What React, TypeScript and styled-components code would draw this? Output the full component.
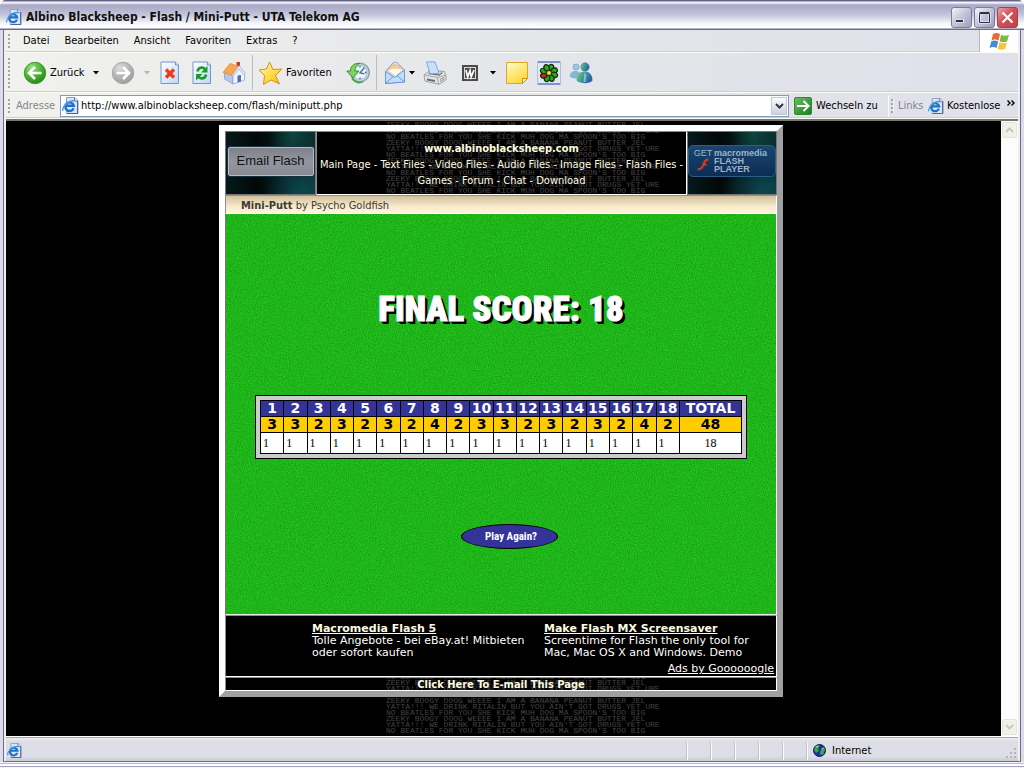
import React from "react";
import styled, { createGlobalStyle } from "styled-components";

const UI = `"DejaVu Sans Condensed", "DejaVu Sans", sans-serif`;
const WIDE = `"DejaVu Sans", sans-serif`;

const GlobalStyle = createGlobalStyle`
  * { box-sizing: border-box; }
  body { margin: 0; font: 11px/14px ${UI}; color: #000; }
  button, input { font: inherit; color: inherit; margin: 0; }
  svg { display: block; flex: none; }
`;

/* ---------- window frame ---------- */

const Window = styled.div`
  height: 100vh;
  min-height: 400px;
  display: flex;
  flex-direction: column;
  background: linear-gradient(#6a6790 0 1px, #f4f4fa 1px 3px, #dcdce8 3px);
  border-radius: 6px 6px 0 0;
  overflow: hidden;
`;

const TitleBar = styled.header`
  flex: none;
  height: 30px;
  display: flex;
  align-items: center;
  padding: 4px 6px 0 6px;
  background: linear-gradient(#67648b 0 1px, #fbfbff 2px, #ecebf6 3px, #a9a8c6 5px, #b3b2ce 9px, #c5c5db 15px, #f4f4fa 23px, #fff 27px, #fff 28px, #6b6b90 29px);
`;

const Title = styled.h1`
  flex: 1;
  margin: 0 0 0 4px;
  font: bold 12px/16px ${UI};
  color: #111;
  white-space: nowrap;
`;

const WindowButtons = styled.div`
  display: flex;
  gap: 2px;
`;

const WindowButton = styled.button<{ $close?: boolean }>`
  width: 21px;
  height: 21px;
  padding: 0;
  display: grid;
  place-items: center;
  border: 1px solid ${(p) => (p.$close ? "#a8404a" : "#7c7b9c")};
  border-radius: 3px;
  background: ${(p) =>
    p.$close
      ? "linear-gradient(135deg, #eba6a6, #d2525a 45%, #c03f49)"
      : "linear-gradient(135deg, #f5f5fb, #c3c3d8 50%, #9f9ebd)"};
`;

const Body = styled.div`
  flex: 1;
  min-height: 0;
  display: flex;
  flex-direction: column;
  margin: 0 3px;
  padding: 0 2px;
  border: solid #6b6b90;
  border-width: 0 1px 1px;
  background: #efefee;
`;

const Frame = styled.div`
  flex: none;
  height: 6px;
  background: linear-gradient(#f6f6fb 0 1px, #b9b9d0 1px 2px, #fff 2px 4px, #a3a2c4 4px 5px, #f2f2fa 5px);
`;

/* ---------- bars ---------- */

const Bar = styled.div<{ $h: number }>`
  flex: none;
  height: ${(p) => p.$h}px;
  display: flex;
  align-items: center;
  padding-left: 2px;
  background: linear-gradient(90deg, #f1f1ee, #e6e7ea 45%, #dfe0ea);
  border-bottom: 1px solid #fdfdf8;
  box-shadow: inset 0 -1px #d9cdb8;
`;

const Grip = styled.span<{ $h: number }>`
  flex: none;
  width: 3px;
  height: ${(p) => p.$h}px;
  background: repeating-linear-gradient(#a2a2a2 0 2px, transparent 2px 4px);
  border-right: 1px solid #f4f4f2;
`;

const Menu = styled.nav`
  display: flex;
  flex: 1;
  gap: 15px;
  padding-left: 12px;
`;

const MenuItem = styled.button`
  padding: 0;
  border: 0;
  background: none;
  line-height: 18px;
`;

const Throbber = styled.div`
  align-self: stretch;
  width: 39px;
  display: grid;
  place-items: center;
  border-left: 1px solid #b8b8c0;
  background: #fff;
`;

const Tools = styled.div`
  display: flex;
  align-items: center;
  padding-left: 11px;
`;

const Tool = styled.button<{ $w: number; $pad?: number }>`
  width: ${(p) => p.$w}px;
  height: 36px;
  padding: 0 0 0 ${(p) => p.$pad ?? 0}px;
  display: flex;
  align-items: center;
  justify-content: ${(p) => (p.$pad === undefined ? "center" : "flex-start")};
  gap: 3px;
  border: 0;
  background: none;
  white-space: nowrap;
`;

const Separator = styled.span`
  width: 1px;
  height: 35px;
  background: #b9bcc6;
`;

const AddressForm = styled.form`
  flex: 1;
  min-width: 0;
  display: flex;
  align-items: center;
`;

const Muted = styled.span`
  color: #85858c;
`;

const AddressLabel = styled.label`
  width: 49px;
  padding-left: 5px;
  color: #85858c;
`;

const AddressBox = styled.div`
  flex: 1;
  min-width: 0;
  height: 22px;
  display: flex;
  align-items: center;
  padding: 1px;
  border: 1px solid #7f9db9;
  background: #fff;
`;

const AddressInput = styled.input`
  flex: 1;
  min-width: 0;
  border: 0;
  padding: 0 0 0 2px;
  outline: 0;
  background: none;
`;

const DropButton = styled.button`
  width: 16px;
  height: 18px;
  padding: 0;
  display: grid;
  place-items: center;
  border: 1px solid #c4c7d8;
  background: linear-gradient(#fbfbfe, #cfd0df);
`;

const GoButton = styled.button`
  width: 100px;
  padding: 0 0 0 5px;
  display: flex;
  align-items: center;
  gap: 4px;
  border: 0;
  border-right: 1px solid #fafaf6;
  background: none;
  line-height: 22px;
  white-space: nowrap;
`;

const LinksBar = styled.div`
  flex: none;
  width: 129px;
  display: flex;
  align-items: center;
  padding-left: 2px;
`;

const LinksTitle = styled(Muted)`
  flex: none;
  width: 34px;
  padding-left: 4px;
`;

const LinkItem = styled.a`
  flex: none;
  width: 75px;
  display: flex;
  align-items: center;
  gap: 3px;
  color: #000;
  text-decoration: none;
`;

const MoreButton = styled.button`
  align-self: flex-start;
  width: 15px;
  height: 10px;
  padding: 0;
  display: grid;
  place-items: center;
  border: 0;
  background: none;
`;

/* ---------- page area ---------- */

const View = styled.div`
  flex: 1;
  min-height: 0;
  display: flex;
  border-top: 2px solid #77776f;
  border-bottom: 1px solid #fff;
`;

const Page = styled.main`
  position: relative;
  flex: 1;
  min-width: 0;
  overflow: hidden;
  background: #000;
  padding: 4px 5px 0 0;
`;

const Wallpaper = styled.div`
  position: absolute;
  inset: 1px 0 0;
  display: flex;
  justify-content: center;
  overflow: hidden;
  padding-left: 25px;
`;

const WallpaperText = styled.div`
  width: 260px;
  white-space: pre;
  font: 8px/6px "Liberation Mono", monospace;
  color: #444;
`;

const WallpaperLine = styled.div`
  height: 6px;
`;

const ScrollBar = styled.div`
  width: 17px;
  display: flex;
  flex-direction: column;
  justify-content: space-between;
  align-items: center;
  padding: 1px;
  background: #fcfcfd;
`;

const ScrollButton = styled.button`
  width: 15px;
  height: 16px;
  padding: 0;
  display: grid;
  place-items: center;
  border: 1px solid #e4e4da;
  border-radius: 2px;
  background: #f1f1ea;
`;

const Site = styled.div`
  position: relative;
  width: 564px;
  max-width: 100%;
  margin: 0 auto;
  border: 6px solid;
  border-color: #fff #a0a0a3 #a0a0a3 #fff;
`;

const Row = styled.div`
  display: flex;
`;

const Cell = styled.div`
  border: 1px solid;
  border-color: #8e8e8e #fff #fff #8e8e8e;
`;

const SideCell = styled(Cell)<{ $w: number }>`
  width: ${(p) => p.$w}px;
  height: 64px;
  display: flex;
  align-items: center;
  justify-content: center;
  padding-bottom: 4px;
  border-color: #777;
  background:
    radial-gradient(ellipse 24px 40px at 75% 5%, #0f5046cc, transparent),
    radial-gradient(ellipse 40px 36px at 85% 95%, #0d4f58cc, transparent),
    linear-gradient(90deg, #06191b, #020808 35%, #0a2c30);
`;

const EmailButton = styled.button`
  width: 86px;
  height: 29px;
  padding: 0;
  border: 1px solid #b9bcc4;
  border-radius: 2px;
  box-shadow: 0 0 0 1px #16323f;
  background: linear-gradient(#7d808a, #94959f 50%, #878993);
  color: #111;
  font: 13px/16px "Liberation Sans", sans-serif;
`;

const FlashBadge = styled.a`
  width: 88px;
  height: 32px;
  flex: none;
  display: flex;
  padding: 3px 0 0 3px;
  border: 1px solid #2a5c86;
  border-radius: 5px;
  background: linear-gradient(#1a4670, #0b2d54);
  color: #9fb4c6;
  font: 9px/8px "Liberation Sans", sans-serif;
  text-decoration: none;
`;

const BadgeLeft = styled.span`
  width: 22px;
  display: flex;
  flex-direction: column;
  align-items: center;
  gap: 1px;
`;

const BadgeRight = styled.span`
  font-weight: bold;
  white-space: nowrap;
`;

const NavCell = styled(Cell)`
  flex: 1;
  padding-top: 9px;
  text-align: center;
  font-size: 11px;
  line-height: 16px;
  color: #fffbe0;
  white-space: nowrap;
`;

const SiteName = styled.h2`
  margin: 0;
  font: bold 11px/16px ${UI};
`;

const PaleLink = styled.a`
  color: #fffbe0;
  text-decoration: none;
`;

const TitleCell = styled(Cell)`
  height: 18px;
  padding-left: 15px;
  line-height: 19px;
  color: #3c3a34;
  border-bottom-width: 0;
  background: linear-gradient(#d2c09c, #f6eacb 60%, #fdf4dc);
`;

const Game = styled.section`
  position: relative;
  height: 402px;
  display: flex;
  flex-direction: column;
  align-items: center;
  border: 1px solid;
  border-color: #fff #fff #e8e8e8 #777;
  background: #20b81c;
  overflow: hidden;
  padding-top: 75px;
`;

const Grass = styled.svg`
  position: absolute;
  inset: 0;
  width: 100%;
  height: 100%;
`;

const FinalScore = styled.h3`
  position: relative;
  margin: 0 0 64px;
  font: 900 35px/42px "Liberation Sans Narrow", "Roboto Condensed", "Liberation Sans", sans-serif;
  color: #fff;
  white-space: nowrap;
  -webkit-text-stroke: 1px #fff;
  text-shadow: 1px 1px #000, 2px 2px #000, 3px 3px #000;
`;

const CardFrame = styled.div`
  position: relative;
  padding: 4px;
  border: 1px solid #000;
  background: #ccc;
`;

const Card = styled.table`
  width: 482px;
  table-layout: fixed;
  border-collapse: collapse;
  background: #fff;
`;

const TotalCol = styled.col`
  width: 62px;
`;

const CardCell = styled.td<{ $kind: "hole" | "par" | "score"; $center?: boolean }>`
  height: ${(p) => (p.$kind === "score" ? 21 : 16)}px;
  padding: 0 0 0 ${(p) => (p.$kind === "score" && !p.$center ? 2 : 0)}px;
  border: 1px solid #000;
  text-align: ${(p) => (p.$kind !== "score" || p.$center ? "center" : "left")};
  color: ${(p) => (p.$kind === "hole" ? "#fff" : "#000")};
  background: ${(p) => ({ hole: "#333399", par: "#ffcc00", score: "#fff" })[p.$kind]};
  font: ${(p) =>
    p.$kind === "score"
      ? `12px/16px "Liberation Serif", serif`
      : `bold 14px/15px ${WIDE}`};
`;

const PlayAgain = styled.button`
  position: relative;
  width: 97px;
  height: 25px;
  margin: 65px 0 0 16px;
  padding: 0 0 0 4px;
  border: 1px solid #000;
  border-radius: 50%;
  background: #333399;
  color: #fff;
  font: bold 11px/14px "Liberation Sans Narrow", "Roboto Condensed", "Liberation Sans", sans-serif;
`;

const AdsCell = styled(Cell)`
  height: 62px;
  padding: 6px 2px 0 86px;
  background: #000;
  color: #fff;
  font: 11px/12px ${WIDE};
`;

const Ads = styled.div`
  display: grid;
  grid-template-columns: 232px 1fr;
  height: 41px;
`;

const AdLink = styled.a`
  display: block;
  color: #fffbe0;
  font: bold 11px/13px ${WIDE};
  white-space: nowrap;
`;

const AdText = styled.p`
  margin: 0;
  white-space: pre;
`;

const AdsBy = styled.a`
  display: block;
  text-align: right;
  color: #fff;
`;

const MailCell = styled(Cell)`
  height: 14px;
  line-height: 13px;
  text-align: center;
  font-weight: bold;
`;

/* ---------- status bar ---------- */

const Status = styled.footer`
  flex: none;
  height: 24px;
  display: flex;
  align-items: center;
  padding-top: 2px;
  border-top: 1px solid #a9a9a2;
  background: linear-gradient(#ececf0, #dcdde4 4px, #dedfe6 18px, #c9cad6);
`;

const StatusMain = styled.div`
  flex: 1;
  padding-left: 1px;
`;

const Pane = styled.div<{ $w: number }>`
  width: ${(p) => p.$w}px;
  height: 18px;
  display: flex;
  align-items: center;
  gap: 6px;
  padding-left: 6px;
  border-left: 1px solid #c6c6c0;
  box-shadow: inset 1px 0 #fafafa;
`;

const StatusGrip = styled.div`
  align-self: flex-end;
  padding: 0 1px 2px 0;
`;

/* ---------- icons ---------- */

const PageIE = ({ s = 17 }: { s?: number }) => (
  <svg width={s} height={s} viewBox="0 0 17 17">
    <path d="M4.500 .5h8.500l3 3v13H4.500z" fill="#d9e6fa" stroke="#8a9cc4" />
    <path d="M15.500 4v12.500H5" fill="none" stroke="#4d5f8c" />
    <path d="M12.500.5v3.500h3.500" fill="#f4f8ff" stroke="#566a92" />
    <path d="M11.600 11.300A4.300 4.300 0 1 1 11.800 8.800H4" fill="none" stroke="#1e72c8" strokeWidth="2.400" />
    <path d="M1 14C-.5 10.500 6 3 12.500 3.800" fill="none" stroke="#4a9ae4" strokeWidth="1.400" />
  </svg>
);

const Caret = ({ color = "#000" }: { color?: string }) => (
  <svg width="6" height="4" viewBox="0 0 6 4"><path d="M0 0h6L3 3.500z" fill={color} /></svg>
);

const Arrow = ({ back }: { back?: boolean }) => (
  <svg width="24" height="24" viewBox="0 0 24 24">
    <defs>
      <radialGradient id={back ? "gb" : "gf"} cx=".35" cy=".25" r=".85">
        <stop offset="0" stopColor={back ? "#9be27a" : "#dcdcdc"} />
        <stop offset=".55" stopColor={back ? "#46b02c" : "#b3b3b3"} />
        <stop offset="1" stopColor={back ? "#1f7d14" : "#9a9a9a"} />
      </radialGradient>
    </defs>
    <circle cx="12" cy="12" r="10.700" fill={`url(#${back ? "gb" : "gf"})`} stroke={back ? "#3d9a2c" : "#a5a5a5"} />
    <path
      d={back ? "M18.500 12H7M12 6l-6 6 6 6" : "M5.500 12H17M12 6l6 6-6 6"}
      fill="none" stroke="#fff" strokeWidth="2.600"
    />
  </svg>
);

const Sheet = ({ children }: { children: React.ReactNode }) => (
  <svg width="20" height="24" viewBox="0 0 20 24">
    <defs>
      <linearGradient id="sheet" x2="1" y2="1">
        <stop offset="0" stopColor="#fff" /><stop offset="1" stopColor="#bcd6fa" />
      </linearGradient>
    </defs>
    <path d="M1 1h14.500l3 3V22.500H1z" fill="url(#sheet)" stroke="#7396cf" />
    <path d="M15.500 1v3h3" fill="#dce9fc" stroke="#7396cf" />
    {children}
  </svg>
);

const StopIcon = () => (
  <Sheet><path d="M6 8.500l8 8M14 8.500l-8 8" stroke="#ee3a16" strokeWidth="3.400" /></Sheet>
);

const RefreshIcon = () => (
  <Sheet>
    <path d="M5.500 10.500c.5-4 5-5 7.500-2.500" fill="none" stroke="#1d9a2a" strokeWidth="2.700" />
    <path d="M15.500 5v6.500H9z" fill="#1d9a2a" />
    <path d="M14 13.500c-.5 4-5 5-7.500 2.500" fill="none" stroke="#1d9a2a" strokeWidth="2.700" />
    <path d="M4 19.500V13h6.500z" fill="#1d9a2a" />
  </Sheet>
);

const HomeIcon = () => (
  <svg width="24" height="24" viewBox="0 0 24 24">
    <path d="M14.500 1h3.500v6h-3.500z" fill="#c8391f" />
    <path d="M2.500 11L11 14.500V23l-8.500-5z" fill="#b4c8ec" stroke="#8aa0cf" strokeWidth=".8" />
    <path d="M11 14L17 7l5.500 6.500V19L11 23z" fill="#f3f7ff" stroke="#8ba3d2" strokeWidth=".8" />
    <path d="M1 11.500L8 2.500 17 5.500 10 14.500z" fill="#fba54c" stroke="#e08a3e" strokeWidth=".8" />
    <path d="M17 4.500l6.500 8-1.500 1.500-5-6-6 7.500-1.200-1z" fill="#e9eefb" stroke="#8ba3d2" strokeWidth=".7" />
    <path d="M15.500 14.500l3.500-.5v6.500l-3.500 1z" fill="#4c6fb6" />
  </svg>
);

const StarIcon = () => (
  <svg width="25" height="24" viewBox="0 0 25 24">
    <defs>
      <linearGradient id="star" x2="1" y2="1">
        <stop offset="0" stopColor="#fffbc0" /><stop offset=".6" stopColor="#ffd93b" /><stop offset="1" stopColor="#f4b014" />
      </linearGradient>
    </defs>
    <path d="M11.500 1l3.500 7.500 9-.5-6.500 6.500 4 8.500-8.500-4-7.500 4.500 1-9L1 9l7.500-1z" fill="url(#star)" stroke="#d9901c" strokeLinejoin="round" />
  </svg>
);

const HistoryIcon = () => (
  <svg width="24" height="24" viewBox="0 0 24 24">
    <circle cx="14" cy="11.500" r="9.300" fill="#c9dcec" stroke="#8ba0b0" strokeWidth="1.500" />
    <circle cx="14" cy="11.500" r="7" fill="#e9f4fc" stroke="#a6bccb" />
    <path d="M14 5v1.500M14 16.500V18M19 11.500h1.500M18.500 6.500l-4.500 5.300 4.500 1" fill="none" stroke="#4a6c86" strokeWidth="1.300" />
    <path d="M13.500 2.500C7 2 4.500 6 4.500 10H.8l6.200 7 6-7H9c0-2.500 1-5 4.500-7.500z" fill="#7ed463" stroke="#2f8a22" strokeWidth=".9" />
    <path d="M6 17c2 4.500 7 5.500 11 3.500" fill="none" stroke="#4aa63a" strokeWidth="1.800" />
  </svg>
);

const MailIcon = () => (
  <svg width="22" height="24" viewBox="0 0 22 24">
    <path d="M1.500 10.500L9 2c1.500-1.200 3-1 4.500 0l7 7V21L1.500 22.500z" fill="#d5e6fb" stroke="#7f9fd6" />
    <path d="M3.500 10c2-3.500 4-6 7-6.500 4 .5 6 3 8 5.500L11 15z" fill="#fbc98d" stroke="#e8a45c" strokeWidth=".6" />
    <path d="M4 9.500c4-2 10-2.500 14.500-.8L11.500 15z" fill="#fffdf5" />
    <path d="M1.500 10.500l9 6 10-7.500V21L1.500 22.500z" fill="#bfe0fb" stroke="#6f94d2" />
    <path d="M1.500 22.500l7.500-7M20.500 21l-7.500-6.500" stroke="#6f94d2" />
  </svg>
);

const PrinterIcon = () => (
  <svg width="24" height="24" viewBox="0 0 24 24">
    <path d="M1 14l6-4.500L21.500 10.500 23 15v4l-7 4.300L2 20z" fill="#e6e6e8" stroke="#9d9da2" />
    <path d="M5.500 12.500L16 14l3.500-2.500" fill="none" stroke="#77777e" strokeWidth="1.500" />
    <path d="M3.500 1L12 .8l4 11.500-9 .5z" fill="#c9e0fb" stroke="#83a5dc" />
    <path d="M1 14l13.500 2.500L23 14M14.500 16.500l1 6.500" fill="none" stroke="#a4a4aa" />
    <path d="M4 17.500l8 1.500v2l-8-1.500z" fill="#6a6a72" />
    <path d="M17 18.500l4.500-2.500M17 20.500l4.500-2.500" stroke="#8a8a90" />
  </svg>
);

const WordIcon = () => (
  <svg width="16" height="16" viewBox="0 0 16 16">
    <path d="M0 0h16v16H0z" fill="#4b4b4b" />
    <path d="M2 2.500h12M2 13.500h12M2.500 2v12M13.500 2v12" stroke="#d9d9d9" />
    <path d="M4 5l1.700 7L8 5.500l1.200 6.500L12 5" fill="none" stroke="#fff" strokeWidth="1.700" />
  </svg>
);

const NoteIcon = () => (
  <svg width="22" height="22" viewBox="0 0 22 22">
    <defs>
      <linearGradient id="note" x2=".6" y2="1">
        <stop offset="0" stopColor="#fffbc4" /><stop offset="1" stopColor="#fcd73c" />
      </linearGradient>
    </defs>
    <path d="M.5.5h21v16l-5 5H.5z" fill="url(#note)" stroke="#dba72b" />
    <path d="M16.500 21.500v-5h5z" fill="#fff3a0" stroke="#c88f18" />
  </svg>
);

const FlowerIcon = () => (
  <svg width="24" height="24" viewBox="0 0 24 24">
    <path d="M0 0h24v24H0z" fill="#dfe7f7" />
    <path d="M0 1h24M0 23h24" stroke="#7f93d2" strokeWidth="2" />
    <path d="M.5 0v24M23.500 0v24" stroke="#b3bfe2" />
    {[0, 45, 90, 135, 180, 225, 270, 315].map((a) => (
      <ellipse key={a} cx="12" cy="6.300" rx="2.600" ry="3.300" fill={a === 225 ? "#d8231b" : "#35a51f"} stroke="#0b2a08" strokeWidth="1.200" transform={`rotate(${a + 20} 12 12)`} />
    ))}
    <circle cx="12" cy="12" r="2.300" fill="#f7e43b" stroke="#333" strokeWidth=".6" />
  </svg>
);

const PeopleIcon = () => (
  <svg width="24" height="22" viewBox="0 0 24 22">
    <defs>
      <linearGradient id="ppl" x2="1" y2=".4">
        <stop offset="0" stopColor="#8fce6a" /><stop offset=".5" stopColor="#3f9a9c" /><stop offset="1" stopColor="#2c62a8" />
      </linearGradient>
    </defs>
    <circle cx="7" cy="5" r="3" fill="#9cc8e6" stroke="#5d92c2" strokeWidth=".6" />
    <path d="M.5 14c1-4 3-5 6-5s5 1.500 6 5l-3 2c-4 1-8 0-9-2z" fill="#7eb9d6" />
    <circle cx="16" cy="5" r="4.200" fill="url(#ppl)" stroke="#2e7390" strokeWidth=".5" />
    <path d="M7.500 18.500c0-6 3.500-9 8-9s8 3 8 9c-3 3.500-12 3.500-16 0z" fill="url(#ppl)" />
    <path d="M15.500 10l2 3-1 7h-2z" fill="#bfe3dc" opacity=".6" />
  </svg>
);

const WindowsFlag = () => (
  <svg width="21" height="19" viewBox="0 0 21 19">
    <path d="M4 2c2.500-1.500 4.500-1.500 7 0L9.500 8.500c-2.500-1.500-4.500-1.500-7 0z" fill="#ee6a35" />
    <path d="M12 2.800c2.500 1.300 5 1.300 8 0l-1.800 6.500c-2.500 1.300-5 1.300-7.500 0z" fill="#7cbb3f" />
    <path d="M2.200 9.500c2.500-1.400 4.500-1.400 7 0l-1.600 6.500c-2.500-1.400-4.800-1.400-7 0z" fill="#4a88d8" />
    <path d="M10.400 10.300c2.500 1.300 5 1.300 7.500 0l-1.700 6.500c-2.500 1.400-5 1.400-7.500 0z" fill="#f8c53a" />
  </svg>
);

const GoIcon = () => (
  <svg width="18" height="18" viewBox="0 0 18 18">
    <defs>
      <linearGradient id="go" x2="1" y2="1">
        <stop offset="0" stopColor="#6fbf63" /><stop offset="1" stopColor="#1a7c1e" />
      </linearGradient>
    </defs>
    <rect x=".5" y=".5" width="17" height="17" rx="1.500" fill="url(#go)" stroke="#2c8b2e" />
    <path d="M3 9h10M9.500 4l5 5-5 5" fill="none" stroke="#fff" strokeWidth="2" />
  </svg>
);

const Chevron = ({ up, color }: { up?: boolean; color: string }) => (
  <svg width="9" height="6" viewBox="0 0 9 6">
    <path d={up ? "M1 5l3.500-3.500L8 5" : "M1 1l3.500 3.500L8 1"} fill="none" stroke={color} strokeWidth="2" />
  </svg>
);

const GlobeIcon = () => (
  <svg width="13" height="13" viewBox="0 0 13 13">
    <circle cx="6.500" cy="6.500" r="6" fill="#1b2fa8" stroke="#0d1b4d" />
    <path d="M2 3c2-2.500 4.500-2 5-1L5 5l1 2-3 2-2-3zM8 5l3-2 1 3-1.500 4L8 11.500 7 9z" fill="#3fa34a" />
    <path d="M3 3l2-1M9 5l1.500-.8" stroke="#bfe8c0" />
  </svg>
);

const FlashMark = () => (
  <svg width="12" height="13" viewBox="0 0 12 13">
    <path d="M11.500.5C7.500.5 6.500 3 5.500 6 4.500 9 3.500 10 .5 10.200v2.300C5 12.500 6 10 7 7.800h2.500V5.600H8C8.700 3.800 9.500 3 11.500 2.800z" fill="#d23a22" />
  </svg>
);

/* ---------- data ---------- */

const menu = ["Datei", "Bearbeiten", "Ansicht", "Favoriten", "Extras", "?"];
const pars = [3, 3, 2, 3, 2, 3, 2, 4, 2, 3, 3, 2, 3, 2, 3, 2, 4, 2];
const navRows = [
  ["Main Page", "Text Files", "Video Files", "Audio Files", "Image Files", "Flash Files"],
  ["Games", "Forum", "Chat", "Download"],
];
const chant = [
  "ZEEKY BOOGY DOOG WEEEE I AM A BANANA PEANUT BUTTER JEL",
  "YATTA!!! WE DRINK RITALIN BUT YOU AIN'T GOT DRUGS YET URE",
  "NO BEATLES FOR YOU SHE KICK MUH DOG MA SPOON'S TOO BIG",
];
/* The lines from 12 to 91 lie behind the opaque game panel and stay empty. */
const wallpaperLines = Array.from({ length: 102 }, (_, i) =>
  i > 11 && i < 92 ? "" : chant[i % 3]
);

export default function App() {
  return (
    <>
      <GlobalStyle />
      <Window>
        <TitleBar>
          <PageIE s={16} />
          <Title>Albino Blacksheep - Flash / Mini-Putt - UTA Telekom AG</Title>
          <WindowButtons>
            <WindowButton aria-label="Minimieren">
              <svg width="13" height="13" viewBox="0 0 13 13"><path d="M1 8.500h8v3H1z" fill="#fff" /><path d="M1 9h7v2H1z" fill="#2e2e48" /></svg>
            </WindowButton>
            <WindowButton aria-label="Maximieren">
              <svg width="13" height="13" viewBox="0 0 13 13"><path d="M1.500 2h10v9.500h-10z" fill="none" stroke="#fff" strokeWidth="2" /><path d="M1.500 2.500h10v9h-10zM1.500 1.500h10" fill="none" stroke="#2e2e48" /></svg>
            </WindowButton>
            <WindowButton $close aria-label="Schließen">
              <svg width="13" height="13" viewBox="0 0 13 13"><path d="M1.500 1.500l10 10M11.500 1.500l-10 10" stroke="#fff" strokeWidth="2.200" /></svg>
            </WindowButton>
          </WindowButtons>
        </TitleBar>

        <Body>
          <Bar $h={23}>
            <Grip $h={14} />
            <Menu>
              {menu.map((m) => <MenuItem key={m}>{m}</MenuItem>)}
            </Menu>
            <Throbber><WindowsFlag /></Throbber>
          </Bar>

          <Bar $h={40}>
            <Grip $h={30} />
            <Tools>
              <Tool $w={66} $pad={1}><Arrow back />Zurück</Tool>
              <Tool $w={16} aria-label="Zurück-Verlauf"><Caret /></Tool>
              <Tool $w={38} aria-label="Vorwärts"><Arrow /></Tool>
              <Tool $w={10} aria-label="Vorwärts-Verlauf"><Caret color="#b5b5b5" /></Tool>
              <Tool $w={36} aria-label="Abbrechen"><StopIcon /></Tool>
              <Tool $w={28} aria-label="Aktualisieren"><RefreshIcon /></Tool>
              <Tool $w={36} aria-label="Startseite"><HomeIcon /></Tool>
              <Separator />
              <Tool $w={86} $pad={5}><StarIcon />Favoriten</Tool>
              <Tool $w={37} aria-label="Verlauf"><HistoryIcon /></Tool>
              <Separator />
              <Tool $w={38} $pad={7} aria-label="E-Mail"><MailIcon /><Caret /></Tool>
              <Tool $w={40} aria-label="Drucken"><PrinterIcon /></Tool>
              <Tool $w={30} aria-label="Bearbeiten mit Word"><WordIcon /></Tool>
              <Tool $w={16} aria-label="Editor wählen"><Caret /></Tool>
              <Tool $w={32} aria-label="Diskussion"><NoteIcon /></Tool>
              <Tool $w={32} aria-label="ICQ"><FlowerIcon /></Tool>
              <Tool $w={32} aria-label="Messenger"><PeopleIcon /></Tool>
            </Tools>
          </Bar>

          <Bar $h={26}>
            <Grip $h={14} />
            <AddressForm onSubmit={(e) => e.preventDefault()}>
              <AddressLabel htmlFor="url">Adresse</AddressLabel>
              <AddressBox>
                <PageIE />
                <AddressInput id="url" defaultValue="http://www.albinoblacksheep.com/flash/miniputt.php" />
                <DropButton type="button" aria-label="Adressen anzeigen"><Chevron color="#2f3547" /></DropButton>
              </AddressBox>
              <GoButton><GoIcon />Wechseln zu</GoButton>
            </AddressForm>
            <LinksBar>
              <Grip $h={14} />
              <LinksTitle>Links</LinksTitle>
              <LinkItem href="#"><PageIE s={16} />Kostenlose</LinkItem>
              <MoreButton aria-label="Weitere Links">
                <svg width="8" height="6" viewBox="0 0 8 6"><path d="M.5.500L3 3 .5 5.500M4.500.500L7 3 4.500 5.500" fill="none" stroke="#000" strokeWidth="1.400" /></svg>
              </MoreButton>
            </LinksBar>
          </Bar>

          <View>
            <Page>
              <Wallpaper aria-hidden="true">
                <WallpaperText>
                  {wallpaperLines.map((line, i) => (
                    <WallpaperLine key={i}>{line}</WallpaperLine>
                  ))}
                </WallpaperText>
              </Wallpaper>

              <Site>
                <Row>
                  <SideCell $w={91}><EmailButton>Email Flash</EmailButton></SideCell>
                  <NavCell>
                    <SiteName>www.albinoblacksheep.com</SiteName>
                    {navRows.map((row, r) => (
                      <div key={r}>
                        {row.map((n, i) => (
                          <React.Fragment key={n}>
                            {i > 0 && " - "}
                            <PaleLink href="#">{n}</PaleLink>
                          </React.Fragment>
                        ))}
                        {r === 0 && " -"}
                      </div>
                    ))}
                  </NavCell>
                  <SideCell $w={90}>
                    <FlashBadge href="#">
                      <BadgeLeft>GET<FlashMark /></BadgeLeft>
                      <BadgeRight>macromedia<br />FLASH<br />PLAYER</BadgeRight>
                    </FlashBadge>
                  </SideCell>
                </Row>
                <TitleCell><b>Mini-Putt</b> by Psycho Goldfish</TitleCell>
                <Game>
                  <Grass aria-hidden="true">
                    <filter id="grass" x="0" y="0" width="100%" height="100%" colorInterpolationFilters="sRGB">
                      <feTurbulence type="fractalNoise" baseFrequency=".85" numOctaves="2" seed="4" />
                      <feColorMatrix values=".16 0 0 0 .04  .24 0 0 0 .59  .14 0 0 0 .03  0 0 0 0 1" />
                    </filter>
                    <rect width="100%" height="100%" filter="url(#grass)" />
                  </Grass>
                  <FinalScore>FINAL SCORE: 18</FinalScore>
                  <CardFrame>
                    <Card>
                      <colgroup>
                        {pars.map((_, i) => <col key={i} />)}
                        <TotalCol />
                      </colgroup>
                      <tbody>
                        <tr>
                          {pars.map((_, i) => <CardCell as="th" scope="col" $kind="hole" key={i}>{i + 1}</CardCell>)}
                          <CardCell as="th" scope="col" $kind="hole">TOTAL</CardCell>
                        </tr>
                        <tr>
                          {pars.map((p, i) => <CardCell $kind="par" key={i}>{p}</CardCell>)}
                          <CardCell $kind="par">48</CardCell>
                        </tr>
                        <tr>
                          {pars.map((_, i) => <CardCell $kind="score" key={i}>1</CardCell>)}
                          <CardCell $kind="score" $center>18</CardCell>
                        </tr>
                      </tbody>
                    </Card>
                  </CardFrame>
                  <PlayAgain>Play Again?</PlayAgain>
                </Game>
                <AdsCell>
                  <Ads>
                    <div>
                      <AdLink href="#">Macromedia Flash 5</AdLink>
                      <AdText>{"Tolle Angebote - bei eBay.at! Mitbieten\noder sofort kaufen"}</AdText>
                    </div>
                    <div>
                      <AdLink href="#">Make Flash MX Screensaver</AdLink>
                      <AdText>{"Screentime for Flash the only tool for\nMac, Mac OS X and Windows. Demo"}</AdText>
                    </div>
                  </Ads>
                  <AdsBy href="#">Ads by Goooooogle</AdsBy>
                </AdsCell>
                <MailCell><PaleLink href="#">Click Here To E-mail This Page</PaleLink></MailCell>
              </Site>
            </Page>
            <ScrollBar>
              <ScrollButton aria-label="Nach oben"><Chevron up color="#c9c9bd" /></ScrollButton>
              <ScrollButton aria-label="Nach unten"><Chevron color="#c9c9bd" /></ScrollButton>
            </ScrollBar>
          </View>

          <Status>
            <StatusMain><PageIE s={15} /></StatusMain>
            <Pane $w={24} />
            <Pane $w={24} />
            <Pane $w={24} />
            <Pane $w={24} />
            <Pane $w={24} />
            <Pane $w={200}><GlobeIcon />Internet</Pane>
            <StatusGrip>
              <svg width="11" height="11" viewBox="0 0 11 11">
                <path d="M8 0h2v2H8zM8 4h2v2H8zM8 8h2v2H8zM4 4h2v2H4zM4 8h2v2H4zM0 8h2v2H0z" fill="#b2b2b8" />
              </svg>
            </StatusGrip>
          </Status>
        </Body>
        <Frame />
      </Window>
    </>
  );
}
